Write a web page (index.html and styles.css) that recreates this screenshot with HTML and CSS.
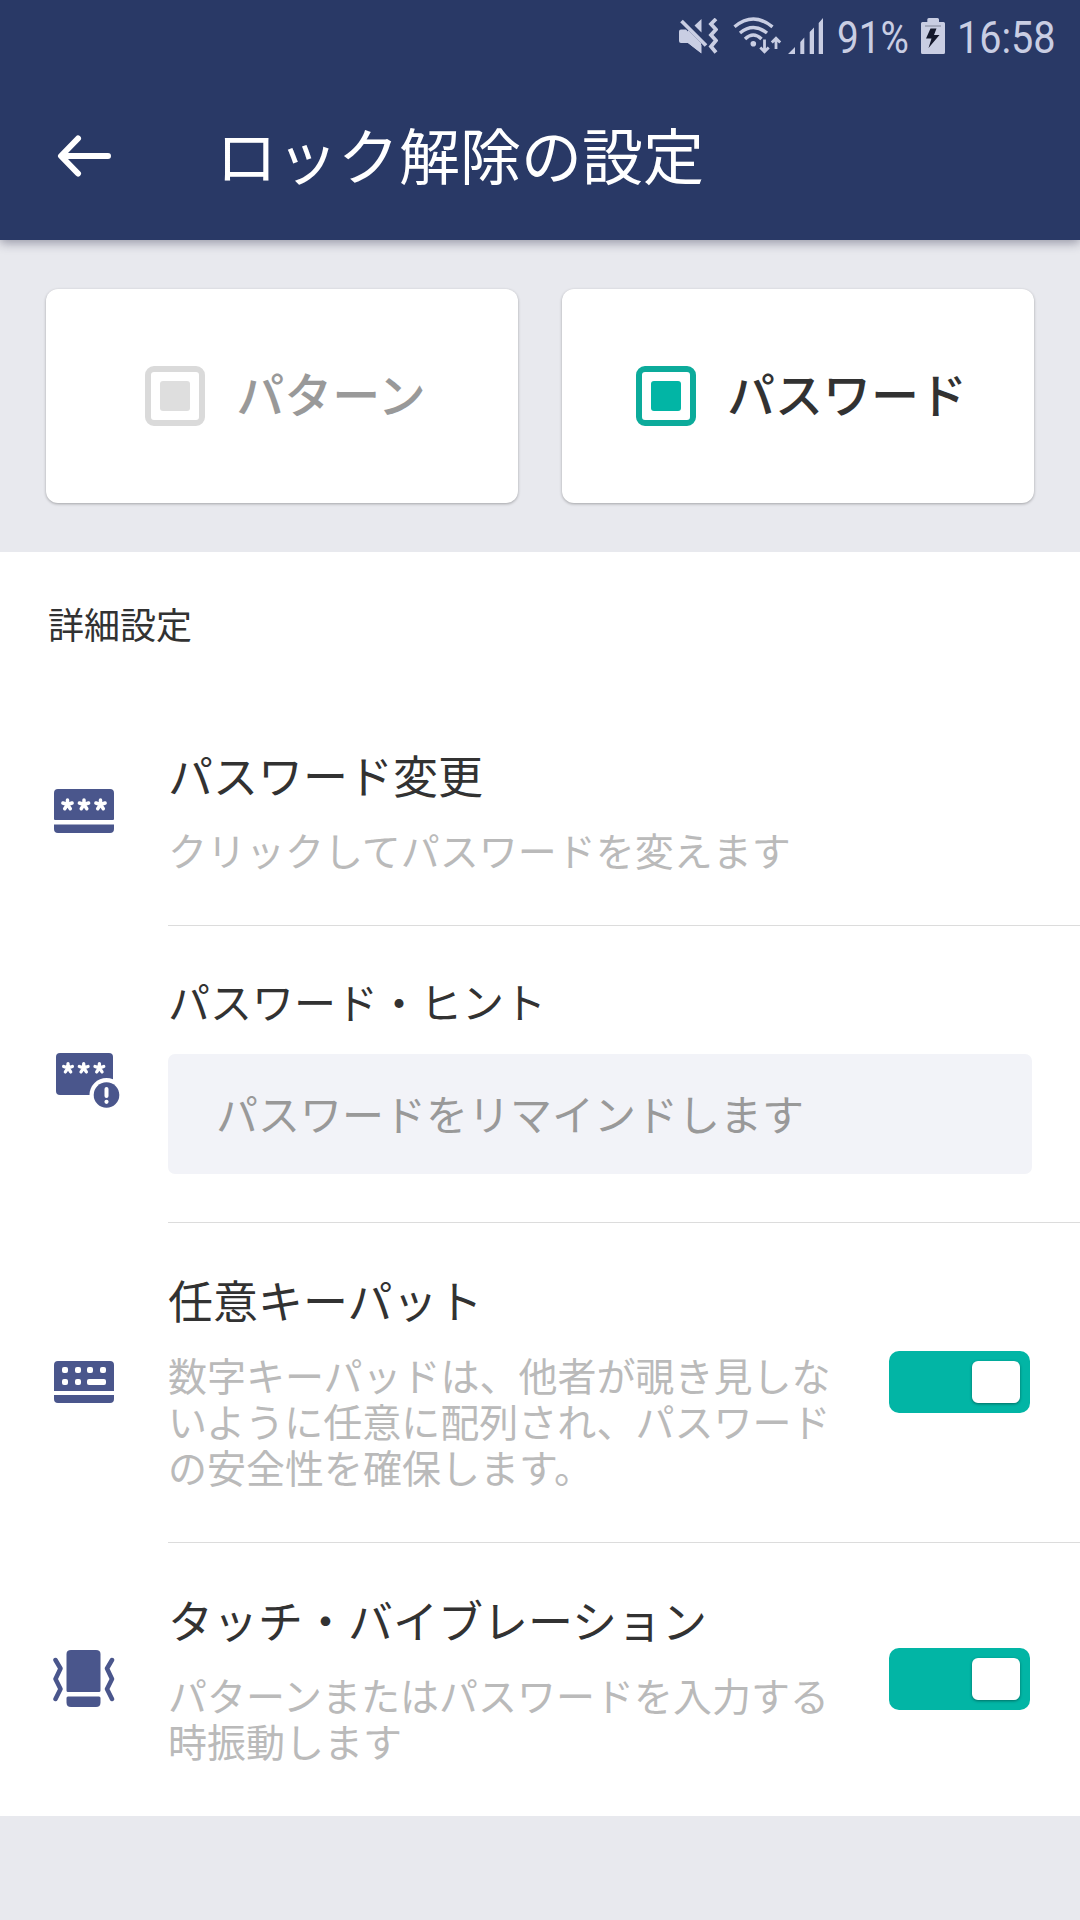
FILE: index.html
```html
<!DOCTYPE html>
<html lang="ja">
<head>
    <meta charset="UTF-8">
    <meta name="viewport" content="width=device-width, initial-scale=1.0">
    <title>ロック解除の設定</title>
    <link rel="stylesheet" href="styles.css">
</head>
<body>
    <header>
        <div class="status-bar">
            <svg class="mute" width="39" height="36" viewBox="0 0 39 36">
                <path d="M0 13.5Q0 11.5 2 11.5H7L22.5 27V35.5L9 25H2Q0 25 0 23zM15.5 7.5L22.5 1V14.5z" fill="currentColor"/>
                <path d="M9 12L22 25V35L9 25z" fill="currentColor"/>
                <path d="M2.5 3L27 27.5" stroke="currentColor" stroke-width="3.8"/>
                <path d="M37 1L32 6L37 11.5L32 17L37 22.5L32 28.5L37 34.5" fill="none" stroke="currentColor" stroke-width="3.8"/>
            </svg>
            <svg class="wifi" width="49" height="38" viewBox="0 0 49 38">
                <g fill="none" stroke="currentColor" stroke-width="3.4">
                    <path d="M1.5 9.8Q20.3 -5.6 39.5 9.8"/>
                    <path d="M7 16Q20.3 5 34 16"/>
                    <path d="M12 22Q20.3 14 28.5 22"/>
                </g>
                <circle cx="20.3" cy="26.7" r="2.8" fill="currentColor"/>
                <path d="M31.5 22.5V34M27.3 30.5L31.5 34.8L35.7 30.5M43 32V22M38.8 25.5L43 21.2L47.2 25.5" fill="none" stroke="currentColor" stroke-width="2.8"/>
            </svg>
            <svg class="signal" width="36" height="36" viewBox="0 0 36 36">
                <path d="M0 36L7 29V36zM12.3 36V24L16.3 19.5V36zM21.7 36V14L26 9.5V36zM30.7 36V5L35 0V36z" fill="currentColor"/>
            </svg>
            <span class="percent">91%</span>
            <svg class="battery" width="24" height="36" viewBox="0 0 24 36">
                <path d="M6.3 4V1.5Q6.3 0 7.8 0H16.5Q18 0 18 1.5V4H22.5Q24 4 24 5.5V34.5Q24 36 22.5 36H1.5Q0 36 0 34.5V5.5Q0 4 1.5 4z" fill="currentColor"/>
                <path d="M4 8H20" stroke="#7f8497" stroke-width="1"/>
                <path d="M9.5 10.5H15.5L13 17H18.5L7.5 30L10.5 20.5H5z" fill="#14182c"/>
            </svg>
            <span class="clock">16:58</span>
        </div>
        <div class="title-bar">
            <svg width="54" height="42" viewBox="0 0 54 42">
                <path d="M51 21H4.5M21 3.5L4 21L21 38.5" fill="none" stroke="#fff" stroke-width="6" stroke-linecap="round" stroke-linejoin="round"/>
            </svg>
            <h1>ロック解除の設定</h1>
        </div>
    </header>

    <section class="types">
        <div class="card">
            <span class="check"></span>
            <span class="label">パターン</span>
        </div>
        <div class="card active">
            <span class="check"></span>
            <span class="label">パスワード</span>
        </div>
    </section>

    <main>
        <h2>詳細設定</h2>

        <div class="row">
            <div class="icon">
                <svg width="60" height="44" viewBox="0 0 60 44">
                    <path d="M4 0H56Q60 0 60 4V30Q60 31 59 31H1Q0 31 0 30V4Q0 0 4 0zM0 35.5H60V40Q60 44 56 44H4Q0 44 0 40z" fill="#4a568c"/>
                    <g id="stars" stroke="#fff" stroke-width="3.5" stroke-linecap="round">
                        <path id="star" d="M13.5 15.5V11M13.5 15.5L8.900 14M13.5 15.5L18.1 14M13.5 15.5L10.7 19.7M13.5 15.5L16.3 19.7"/>
                        <use href="#star" x="16.5"/>
                        <use href="#star" x="33"/>
                    </g>
                </svg>
            </div>
            <div class="content">
                <h3>パスワード変更</h3>
                <p>クリックしてパスワードを変えます</p>
            </div>
        </div>

        <div class="row hint">
            <div class="icon">
                <svg width="64" height="56" viewBox="0 0 64 56">
                    <rect width="57" height="42" rx="4" fill="#4a568c"/>
                    <use href="#stars" transform="translate(-.8 .2) scale(.95)"/>
                    <circle cx="50.5" cy="42" r="17" fill="#fff"/>
                    <circle cx="50.5" cy="42" r="12.8" fill="#4a568c"/>
                    <path d="M50.5 36V43" stroke="#fff" stroke-width="4" stroke-linecap="round"/>
                    <circle cx="50.5" cy="48.8" r="2.1" fill="#fff"/>
                </svg>
            </div>
            <div class="content">
                <h3>パスワード・ヒント</h3>
                <input type="text" placeholder="パスワードをリマインドします">
            </div>
        </div>

        <div class="row">
            <div class="icon">
                <svg width="60" height="42" viewBox="0 0 60 42">
                    <path d="M4 0H56Q60 0 60 4V30H0V4Q0 0 4 0zM0 34H60V38Q60 42 56 42H4Q0 42 0 38z" fill="#4a568c"/>
                    <g fill="#fff">
                        <rect x="8" y="6" width="6" height="6" rx="2"/>
                        <rect x="21" y="6" width="6" height="6" rx="2"/>
                        <rect x="33" y="6" width="6" height="6" rx="2"/>
                        <rect x="46" y="6" width="6" height="6" rx="2"/>
                        <rect x="8" y="18" width="6" height="6" rx="2"/>
                        <rect x="21" y="18" width="6" height="6" rx="2"/>
                        <rect x="33" y="18" width="19" height="6" rx="2"/>
                    </g>
                </svg>
            </div>
            <div class="content">
                <h3>任意キーパット</h3>
                <p>数字キーパッドは、他者が覗き見しないように任意に配列され、パスワードの安全性を確保します。</p>
                <span class="toggle"></span>
            </div>
        </div>

        <div class="row">
            <div class="icon">
                <svg width="62" height="57" viewBox="0 0 62 57">
                    <path d="M18 0H43Q47.5 0 47.5 4V40.5Q47.5 42 46 42H15Q13.5 42 13.5 40.5V4Q13.5 0 18 0zM15 46.5H46Q47.5 46.5 47.5 48V52.5Q47.5 57 43 57H18Q13.5 57 13.5 52.5V48Q13.5 46.5 15 46.5z" fill="#4a568c"/>
                    <path d="M2.5 10L7.5 18.5L2.5 29L7.5 39L2.5 49M59 10L54 18.5L59 29L54 39L59 49" fill="none" stroke="#4a568c" stroke-width="4.5" stroke-linecap="round" stroke-linejoin="round"/>
                </svg>
            </div>
            <div class="content">
                <h3>タッチ・バイブレーション</h3>
                <p>パターンまたはパスワードを入力する時振動します</p>
                <span class="toggle"></span>
            </div>
        </div>
    </main>
</body>
</html>
```
FILE: styles.css
```css
* {
    box-sizing: border-box;
}

body {
    font-family: "Noto Sans CJK JP", sans-serif;
    margin: 0;
    min-height: 1920px;
    background-color: #e8e9ee;
    color: #323232;
}

svg {
    display: block;
    flex: none;
}

h1, h2, h3, p {
    margin: 0;
    font-weight: normal;
}

header {
    height: 240px;
    background-color: #293966;
    color: white;
    box-shadow: 0 3px 10px rgba(30, 30, 60, 0.4);
}

.status-bar {
    display: flex;
    justify-content: flex-end;
    align-items: center;
    height: 72px;
    padding-right: 24px;
    color: #c9cee3;
    font-family: Roboto, sans-serif;
    font-size: 45px;
}

.wifi {
    margin: 0 6px 0 15px;
}

.percent, .clock {
    transform: scaleX(0.86);
    transform-origin: left;
    white-space: nowrap;
}

.percent {
    width: 72px;
    margin: 2px 12px 0 13px;
}

.clock {
    width: 99px;
    margin: 2px 0 0 12px;
    transform: scaleX(0.88);
}

.title-bar {
    display: flex;
    align-items: center;
    height: 168px;
    padding-left: 57px;
}

h1 {
    margin-left: 105px;
    padding-bottom: 5px;
    font-size: 61px;
    line-height: 84px;
}

.types {
    display: flex;
    gap: 44px;
    height: 312px;
    padding: 49px 46px;
}

.card {
    flex: 1;
    display: flex;
    justify-content: center;
    align-items: center;
    padding-left: 7px;
    background-color: white;
    border-radius: 12px;
    box-shadow: 0 1px 3px rgba(0, 0, 0, 0.3);
    color: #999;
    font-size: 48px;
    font-weight: 500;
}

.check {
    width: 60px;
    height: 60px;
    margin-right: 31px;
    padding: 9px;
    border: 6px solid #dadada;
    border-radius: 9px;
}

.check::before {
    content: "";
    display: block;
    height: 30px;
    border-radius: 3px;
    background-color: #dedede;
}

.label {
    padding-bottom: 8px;
}

.active {
    color: #323232;
}

.active .check {
    border-color: #0cab9b;
}

.active .check::before {
    background-color: #02b5a5;
}

main {
    background-color: white;
}

h2 {
    height: 146px;
    padding: 47px 48px 0;
    font-size: 36px;
    line-height: 48px;
}

.row {
    display: flex;
}

.icon {
    display: flex;
    justify-content: center;
    align-items: center;
    width: 168px;
    padding-bottom: 2px;
}

.content {
    position: relative;
    flex: 1;
    padding: 47px 48px 53px 0;
    border-bottom: 1px solid #dcdcdc;
}

.row:last-child .content {
    border-bottom: none;
}

h3 {
    font-size: 45px;
    line-height: 60px;
}

p {
    width: 672px;
    margin-top: 21px;
    color: #bababa;
    font-size: 39px;
    line-height: 46px;
}

.hint .content {
    padding-top: 45px;
    padding-bottom: 48px;
}

.hint h3 {
    font-size: 42px;
}

.hint .icon {
    padding: 13px 0 0 8px;
}

input {
    display: block;
    width: 864px;
    height: 120px;
    margin-top: 23px;
    padding: 0 48px 4px;
    border: none;
    border-radius: 7px;
    background-color: #f2f3f8;
    font-family: inherit;
    font-size: 42px;
}

input::placeholder {
    color: #999;
}

.toggle {
    position: absolute;
    top: 50%;
    right: 50px;
    width: 141px;
    height: 62px;
    margin-top: -32px;
    padding: 10px;
    border-radius: 10px;
    background-color: #02b5a5;
}

.toggle::before {
    content: "";
    display: block;
    width: 48px;
    height: 42px;
    margin-left: auto;
    border-radius: 6px;
    background-color: white;
    box-shadow: 0 1px 3px rgba(0, 0, 0, 0.4);
}
```
